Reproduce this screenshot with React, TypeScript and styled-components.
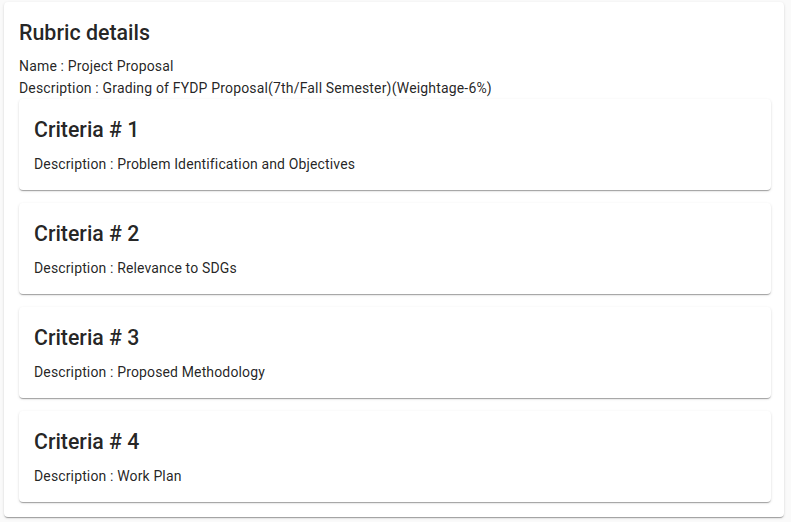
import React from "react";
import styled, { createGlobalStyle } from "styled-components";

const Global = createGlobalStyle`
  html, body { margin: 0; padding: 0; background: #fafafa; }
  body { font-family: Roboto, "Liberation Sans", sans-serif; color: rgba(0,0,0,0.87); }
`;

const Page = styled.div`
  padding: 2px 7px 5px 4px;
`;

const Outer = styled.section`
  background: #fff;
  border-radius: 4px;
  box-shadow: 0px 2px 1px -1px rgba(0,0,0,0.2), 0px 1px 1px 0px rgba(0,0,0,0.14), 0px 1px 3px 0px rgba(0,0,0,0.12);
  padding: 15px 13px 15px 15px;
`;

const Title = styled.h2`
  margin: 0 0 6px;
  font-size: 21.4px;
  font-weight: 500;
  line-height: 32px;
`;

const Meta = styled.p`
  margin: 0;
  font-size: 14px;
  line-height: 22px;
  letter-spacing: 0.012em;
`;

const List = styled.div`
  display: flex;
  flex-direction: column;
  gap: 13px;
`;

const Card = styled.article`
  background: #fff;
  border-radius: 4px;
  box-shadow: 0px 2px 1px -1px rgba(0,0,0,0.2), 0px 1px 1px 0px rgba(0,0,0,0.14), 0px 1px 3px 0px rgba(0,0,0,0.12);
  padding: 16px 15px;
  height: 91px;
  box-sizing: border-box;
`;

const CardTitle = styled.h3`
  margin: 0;
  font-size: 21.3px;
  font-weight: 500;
  line-height: 30px;
`;

const CardDesc = styled.p`
  margin: 9px 0 0;
  font-size: 14px;
  line-height: 20px;
  letter-spacing: 0.01em;
`;

const criteria = [
  "Problem Identification and Objectives",
  "Relevance to SDGs",
  "Proposed Methodology",
  "Work Plan",
];

export default function App() {
  return (
    <Page>
      <Global />
      <Outer>
        <Title>Rubric details</Title>
        <Meta>Name : Project Proposal</Meta>
        <Meta>Description : Grading of FYDP Proposal(7th/Fall Semester)(Weightage-6%)</Meta>
        <List>
          {criteria.map((c, i) => (
            <Card key={i}>
              <CardTitle>Criteria # {i + 1}</CardTitle>
              <CardDesc>Description : {c}</CardDesc>
            </Card>
          ))}
        </List>
      </Outer>
    </Page>
  );
}
